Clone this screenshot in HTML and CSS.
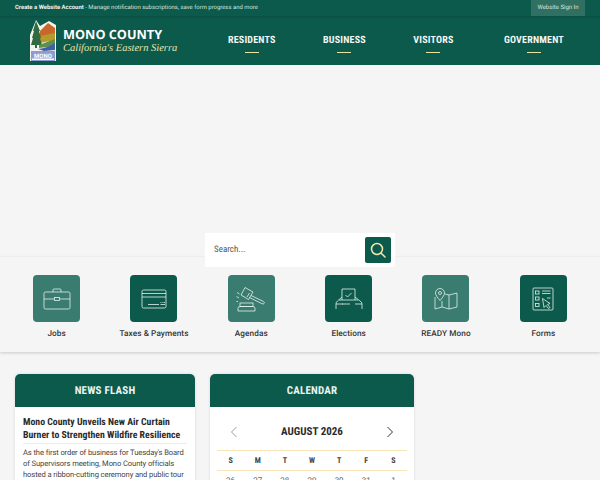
FILE: index.html
```html
<!DOCTYPE html>
<html lang="en">
<head>
  <meta charset="UTF-8" />
  <meta name="viewport" content="width=device-width, initial-scale=1.0"/>
  <title>Mono County - California's Eastern Sierra</title>
  <link rel="stylesheet" href="styles.css">
</head>
<body>

  <div class="topbar">
    <p class="topbar-text"><strong>Create a Website Account</strong> - Manage notification subscriptions, save form progress and more</p>
    <a href="#" class="signin">Website Sign In</a>
  </div>

  <header class="header">
    <a href="#" class="logo">
      <svg class="logo-mark" width="27" height="43" viewBox="0 0 27 43">
        <path d="M0 16 L6 1 L10 7 L19 2 L26 6 L26 42 L0 42 Z" fill="#f4f4ee"/>
        <path d="M10 12 L18 4 L25 9 L25 16 L10 18 Z" fill="#c9672a"/>
        <path d="M10 17 L25 14 L25 21 L10 24 Z" fill="#b59a2c"/>
        <path d="M6 2 L10 12 L9 12 L11 19 L10 19 L12 26 L7 26 L7 29 L5 29 L5 26 L1 26 L3 19 L2 19 L4 12 L3 12 Z" fill="#2f6b3f"/>
        <path d="M9 26 L25 20 L25 27 L9 29 Z" fill="#5f8f4a"/>
        <path d="M8 30 Q18 29 25 24 L25 31 L14 32 Z" fill="#3f5fa8"/>
        <rect x="1" y="32" width="24" height="10" fill="#8f9bd0"/>
        <text x="13" y="38.500" class="logo-mono">MONO</text>
        <rect x="2" y="39.500" width="22" height="1.500" fill="#fff"/>
      </svg>
      <span class="logo-text">
        <span class="logo-name">MONO COUNTY</span>
        <span class="logo-tag">California's Eastern Sierra</span>
      </span>
    </a>
    <nav class="nav">
      <a href="#" class="nav-item nav-residents">RESIDENTS</a>
      <a href="#" class="nav-item nav-business">BUSINESS</a>
      <a href="#" class="nav-item nav-visitors">VISITORS</a>
      <a href="#" class="nav-item nav-government">GOVERNMENT</a>
    </nav>
  </header>

  <section class="hero">
    <form class="search">
      <span class="search-text">Search...</span>
      <button type="button" class="search-btn" aria-label="Search">
        <svg width="18" height="18" viewBox="0 0 18 18" fill="none" stroke="#f3e7b0" stroke-width="1.500" stroke-linecap="round">
          <circle cx="8" cy="8" r="5.500"/>
          <path d="M12.200 12.200 L16 16"/>
        </svg>
      </button>
    </form>
  </section>

  <section class="quick">
    <a href="#" class="quick-item">
      <span class="tile tile-light">
        <svg width="28" height="22" viewBox="0 0 28 22" class="tile-icon">
          <rect x="1" y="4" width="26" height="17" rx="1.500"/>
          <path d="M10 4 V2 Q10 1 11 1 H17 Q18 1 18 2 V4"/>
          <path d="M1 11 H11 M17 11 H27"/>
          <rect x="11.500" y="9.500" width="5" height="3"/>
        </svg>
      </span>
      <span class="quick-label">Jobs</span>
    </a>
    <a href="#" class="quick-item">
      <span class="tile tile-dark">
        <svg width="26" height="20" viewBox="0 0 26 20" class="tile-icon">
          <rect x="1" y="1" width="24" height="18" rx="1.500"/>
          <path d="M1 4.500 H25 M1 8 H25"/>
          <path d="M7 15.500 H18"/>
          <path d="M19.500 13.500 H20.500 M21.500 13.500 H22.500 M23 13.500 H24 M19.500 15.500 H24"/>
        </svg>
      </span>
      <span class="quick-label">Taxes &amp; Payments</span>
    </a>
    <a href="#" class="quick-item">
      <span class="tile tile-light">
        <svg width="30" height="26" viewBox="0 0 30 26" class="tile-icon">
          <path d="M9 1.500 L17 6 L12.500 13.500 L5 9 Z"/>
          <path d="M13.500 7 L11 11"/>
          <path d="M15 9.500 L27.500 15.500 Q29 16.500 28 17.500 Q27.300 18.500 26 17.700 L13.500 11.500"/>
          <path d="M3 12 L0.500 10.500 M3.500 8 L1 6.500 M2 15.500 L0.500 15.500"/>
          <rect x="4" y="17" width="13" height="3.500"/>
          <path d="M2 25 V22.500 Q2 20.500 4 20.500 H17 Q19 20.500 19 22.500 V25 Z"/>
        </svg>
      </span>
      <span class="quick-label">Agendas</span>
    </a>
    <a href="#" class="quick-item">
      <span class="tile tile-dark">
        <svg width="28" height="22" viewBox="0 0 28 22" class="tile-icon">
          <path d="M7 12 V1 H20 V12"/>
          <path d="M10.500 7 L12.500 9 L16.500 5"/>
          <path d="M4 12 H23 M7 16 H15"/>
          <path d="M1 21 V16 Q1 14 2.500 13 L7 9 M20 9 L25 13 Q27 14 27 16 V21"/>
          <path d="M1 16 H8 M20 16 H27"/>
        </svg>
      </span>
      <span class="quick-label">Elections</span>
    </a>
    <a href="#" class="quick-item">
      <span class="tile tile-light">
        <svg width="24" height="23" viewBox="0 0 24 23" class="tile-icon">
          <path d="M6 13.500 Q1.500 8.500 1.500 6 A4.500 4.500 0 0 1 10.500 6 Q10.500 8.500 6 13.500 Z"/>
          <circle cx="6" cy="6" r="1.500"/>
          <path d="M1 10 V22 L8 20 L15 22 L23 20 V6 L15 8 L11 7"/>
          <path d="M8 14 V20 M15 8 V22"/>
        </svg>
      </span>
      <span class="quick-label">READY Mono</span>
    </a>
    <a href="#" class="quick-item">
      <span class="tile tile-dark">
        <svg width="22" height="24" viewBox="0 0 22 24" class="tile-icon">
          <rect x="1" y="1" width="20" height="22" rx="1"/>
          <rect x="3.500" y="4" width="3.500" height="3"/>
          <rect x="3.500" y="10" width="3.500" height="3"/>
          <rect x="3.500" y="16.500" width="3.500" height="3"/>
          <path d="M10 4 H18.500 M10 6.500 H18.500 M15 11 H18.500"/>
          <path d="M10.500 11.500 L18 16.500 L15.500 17.500 L18 20.500 L16.500 21.500 L14 18.500 L12 20.500 Z"/>
        </svg>
      </span>
      <span class="quick-label">Forms</span>
    </a>
  </section>

  <main class="cards">
    <article class="card">
      <h2 class="card-title">NEWS FLASH</h2>
      <div class="news">
        <h3 class="news-title">Mono County Unveils New Air Curtain Burner to Strengthen Wildfire Resilience</h3>
        <p class="news-text">As the first order of business for Tuesday's Board of Supervisors meeting, Mono County officials hosted a ribbon-cutting ceremony and public tour</p>
      </div>
    </article>

    <article class="card">
      <h2 class="card-title">CALENDAR</h2>
      <div class="cal">
        <div class="cal-head">
          <svg width="8" height="12" viewBox="0 0 8 12" fill="none" stroke="#9a9a9a" stroke-width="1"><path d="M6.500 1 L1.500 6 L6.500 11"/></svg>
          <span class="cal-month">AUGUST 2026</span>
          <svg width="8" height="12" viewBox="0 0 8 12" fill="none" stroke="#333" stroke-width="1"><path d="M1.500 1 L6.500 6 L1.500 11"/></svg>
        </div>
        <div class="cal-days">
          <span>S</span><span>M</span><span>T</span><span>W</span><span>T</span><span>F</span><span>S</span>
        </div>
        <div class="cal-dates">
          <span>26</span><span>27</span><span>28</span><span>29</span><span>30</span><span>31</span><span>1</span>
        </div>
      </div>
    </article>
  </main>

</body>
</html>
```

FILE: styles.css
```css
html, body {
  height: 480px;
  overflow: hidden;
}
body {
  margin: 0;
  font-family: Roboto, 'Liberation Sans', sans-serif;
  text-rendering: geometricPrecision;
  background: #f5f5f5;
  color: #333;
}
a {
  text-decoration: none;
  color: inherit;
}

/* top bar */
.topbar {
  height: 16px;
  background: #0c5a4c;
  display: flex;
  justify-content: space-between;
  padding: 0 15px;
  box-shadow: 0 1px 2px rgba(0, 0, 0, 0.15);
  position: relative;
}
.topbar-text {
  margin: 0;
  font-size: 5.93px;
  line-height: 16px;
  color: #d5e3df;
}
.topbar-text strong {
  color: #eef5f3;
}
.signin {
  width: 54px;
  text-align: center;
  background: #2f7062;
  color: #d5e3df;
  font-size: 6px;
  line-height: 16px;
}

/* header */
.header {
  height: 49px;
  background: #0c5a4c;
  display: flex;
  align-items: center;
  padding: 0 36px 0 30px;
}
.logo {
  display: flex;
  align-items: center;
  gap: 6px;
  width: 198px;
  flex: none;
}
.logo-mono {
  font-family: Roboto, sans-serif;
  font-size: 6px;
  font-weight: 700;
  fill: #fff;
  text-anchor: middle;
}
.logo-text {
  display: flex;
  flex-direction: column;
}
.logo-name {
  font-family: 'Open Sans', sans-serif;
  font-weight: 700;
  font-size: 12.7px;
  line-height: 15px;
  color: #fff;
}
.logo-tag {
  font-family: 'Liberation Serif', serif;
  font-style: italic;
  font-size: 10.5px;
  line-height: 13px;
  color: #e8e2a8;
}
.nav {
  flex: 1;
  display: flex;
  justify-content: space-between;
  margin-top: 6px;
}
.nav-item {
  position: relative;
  font-weight: 700;
  font-size: 10px;
  font-stretch: 75%;
  letter-spacing: 0.2px;
  line-height: 14px;
  color: #f1f6f4;
  padding-bottom: 5px;
}
.nav-visitors {
  margin-right: 3px;
}
.nav-item::after {
  content: "";
  position: absolute;
  left: 50%;
  bottom: 0;
  width: 14px;
  height: 1px;
  margin-left: -7px;
  background: #ebe29f;
}

/* hero + search */
.hero {
  height: 192px;
  display: flex;
  justify-content: center;
  align-items: flex-end;
}
.search {
  width: 190px;
  height: 34px;
  margin-bottom: -10px;
  background: #fff;
  box-sizing: border-box;
  padding: 0 4px 1px 9px;
  display: flex;
  justify-content: space-between;
  align-items: center;
  position: relative;
  z-index: 1;
}
.search-text {
  font-size: 9px;
  font-stretch: 75%;
  color: #555;
}
.search-btn {
  width: 26px;
  height: 26px;
  padding: 0;
  border: none;
  border-radius: 2px;
  background: #0c5a4c;
  display: flex;
  align-items: center;
  justify-content: center;
}

/* quick links */
.quick {
  height: 77px;
  padding: 18px 8px 0;
  display: grid;
  grid-template-columns: repeat(6, 1fr);
  background: #f5f5f5;
  box-shadow: 0 1px 3px rgba(0, 0, 0, 0.18);
}
.quick-item {
  display: flex;
  flex-direction: column;
  align-items: center;
  gap: 6px;
}
.tile {
  width: 47px;
  height: 47px;
  border-radius: 4px;
  display: flex;
  align-items: center;
  justify-content: center;
}
.tile-light {
  background: #3a7c6f;
}
.tile-dark {
  background: #0c5a4c;
}
.tile-icon {
  fill: none;
  stroke: #e4f1ec;
  stroke-width: 0.8;
}
.quick-label {
  font-size: 8.2px;
  font-weight: 500;
  letter-spacing: 0.1px;
  line-height: 12px;
  color: #333;
}

/* cards */
.cards {
  padding: 22px 15px 0;
  display: grid;
  grid-template-columns: 180px 204px;
  gap: 15px;
}
.card {
  height: 200px;
  background: #fff;
  border-radius: 5px 5px 0 0;
  box-shadow: 0 0 3px rgba(0, 0, 0, 0.12);
}
.card-title {
  margin: 0;
  height: 32.5px;
  background: #0c5a4c;
  border-radius: 5px 5px 0 0;
  text-align: center;
  font-size: 11px;
  font-weight: 700;
  font-stretch: 75%;
  letter-spacing: 0.2px;
  line-height: 33px;
  color: #eaf4f1;
}
.news {
  padding: 9px 8px 0;
}
.news-title {
  margin: 0;
  border-bottom: 1px solid #f7ecd2;
  font-size: 9.8px;
  font-weight: 700;
  font-stretch: 75%;
  line-height: 13.5px;
  color: #2b2b2b;
}
.news-text {
  margin: 3px 0 0;
  font-size: 7.6px;
  letter-spacing: -0.1px;
  line-height: 11px;
  color: #444;
}
.cal {
  padding: 17px 7px 0;
}
.cal-head {
  display: flex;
  justify-content: space-between;
  align-items: center;
  padding: 0 13px;
  height: 16px;
}
.cal-month {
  font-size: 11px;
  font-weight: 700;
  font-stretch: 75%;
  line-height: 16px;
  color: #2b2b2b;
}
.cal-days,
.cal-dates {
  display: grid;
  grid-template-columns: repeat(7, 1fr);
  text-align: center;
}
.cal-days {
  margin-top: 10px;
  height: 19px;
  border-top: 1px solid #fae5b9;
  border-bottom: 1px solid #fae5b9;
  font-size: 8px;
  font-weight: 700;
  font-stretch: 75%;
  line-height: 19px;
  color: #444;
}
.cal-dates {
  margin-top: 4px;
  font-size: 8px;
  line-height: 12px;
  color: #666;
}
```
